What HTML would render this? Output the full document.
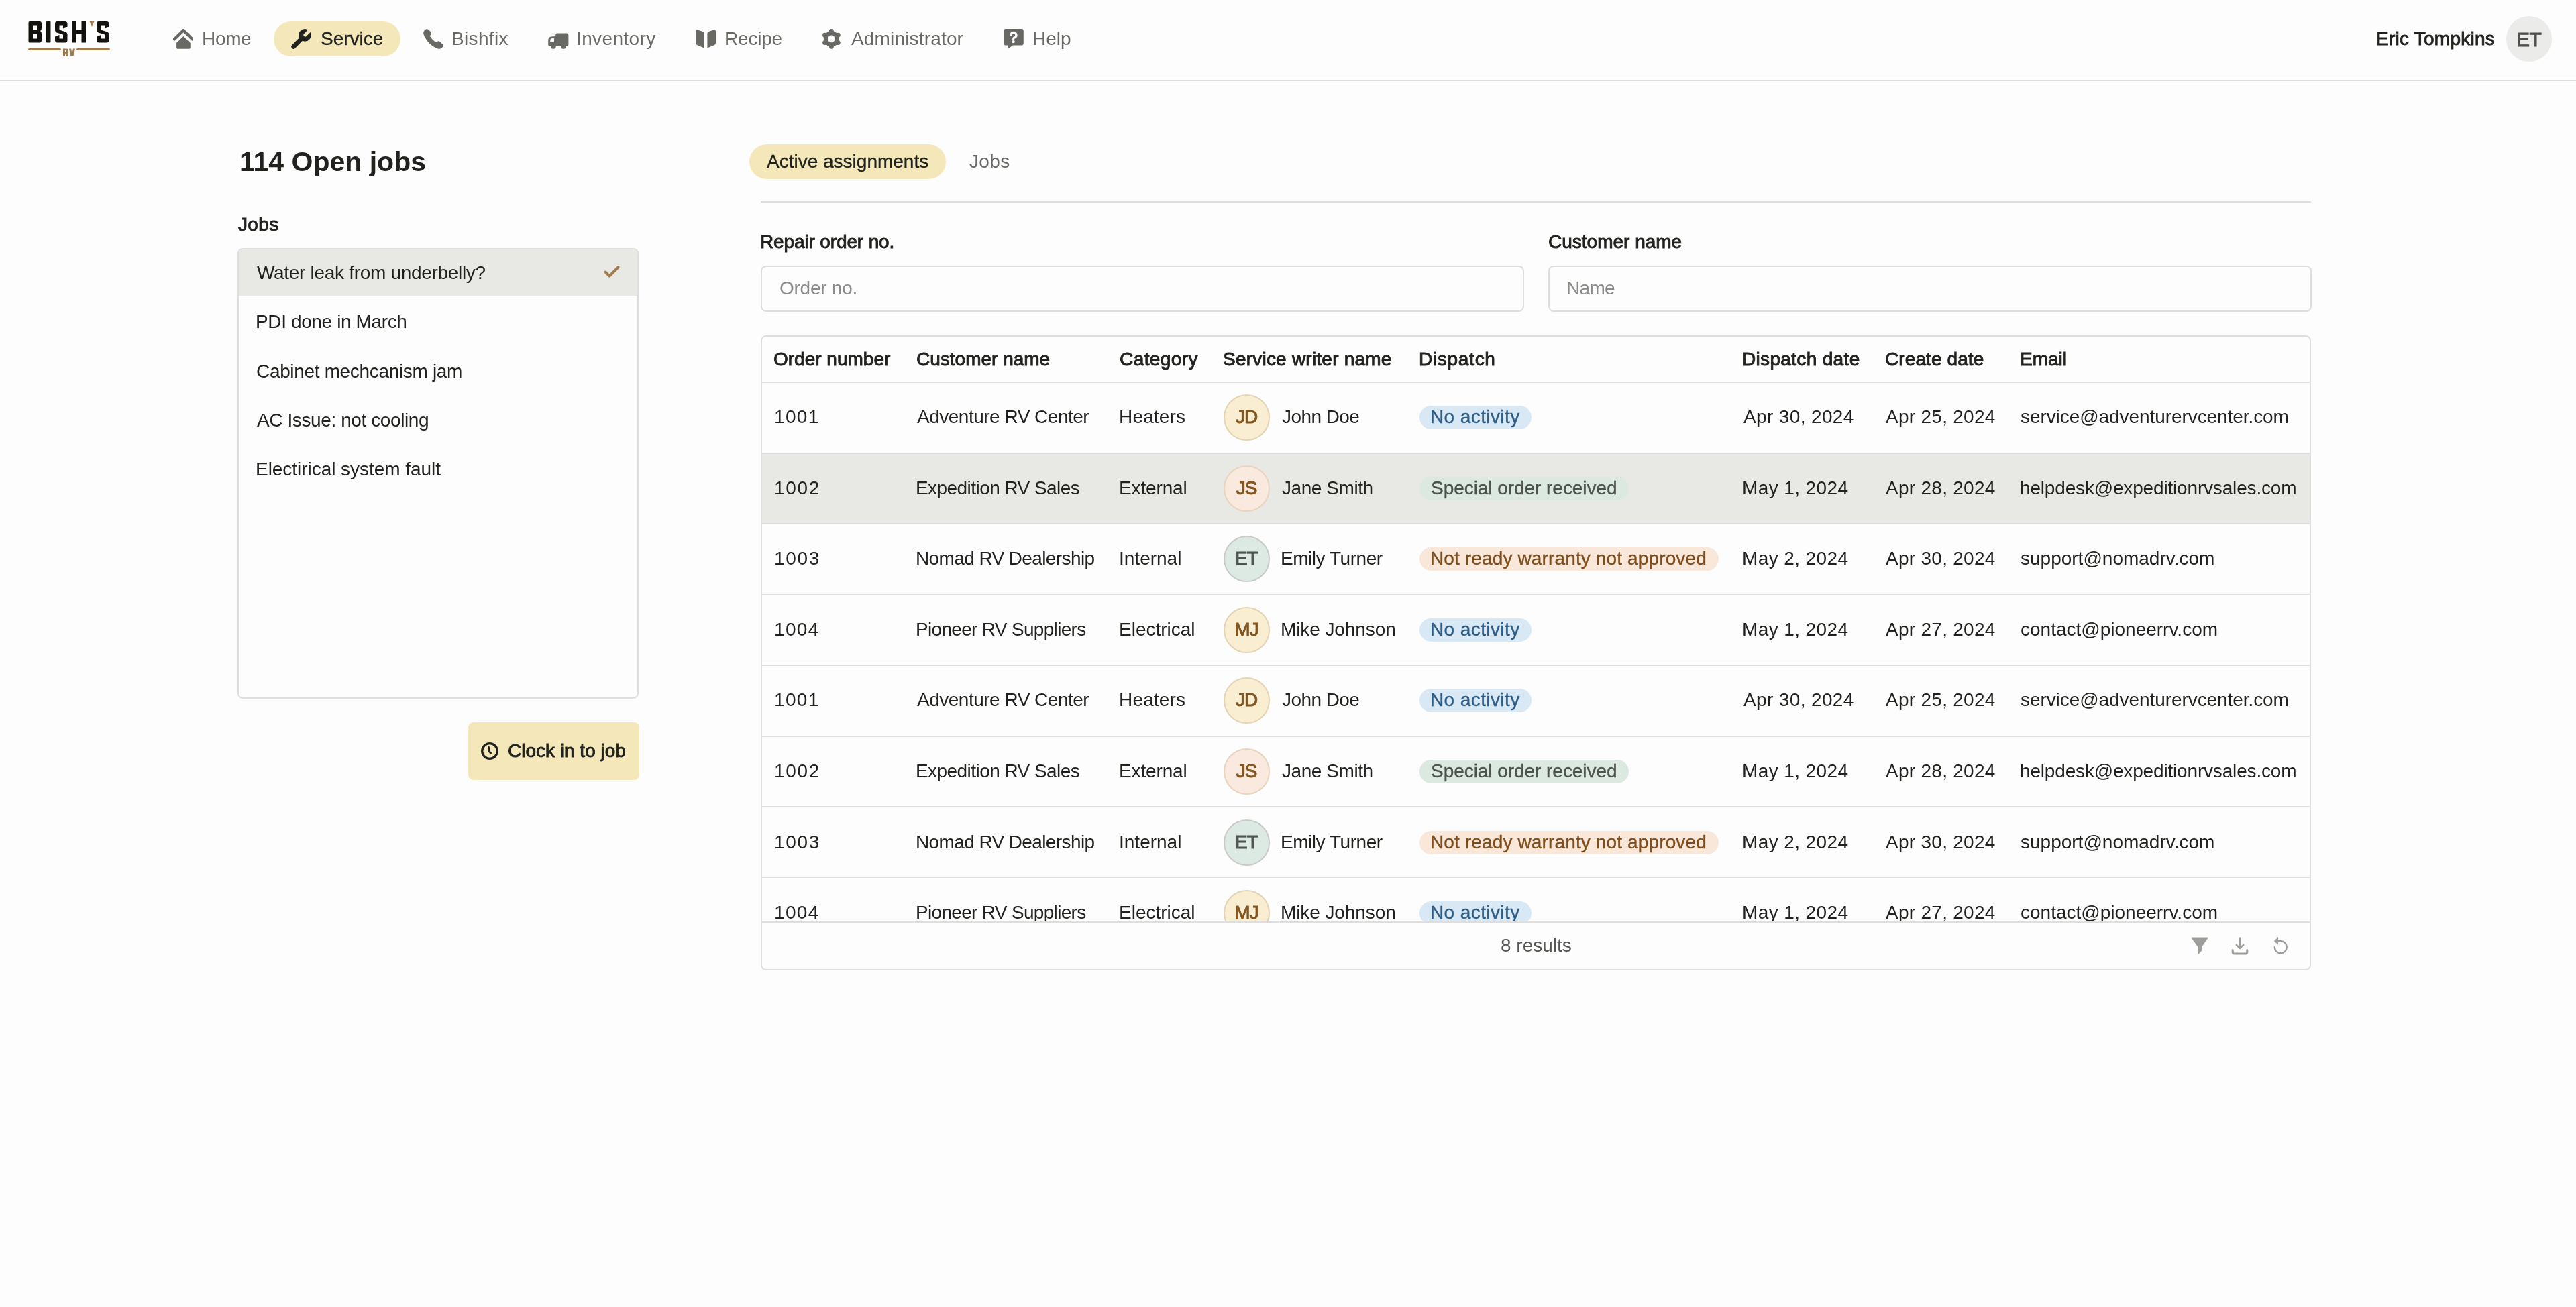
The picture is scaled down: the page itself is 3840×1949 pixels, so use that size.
<!DOCTYPE html><html><head><meta charset="utf-8"><style>
*{box-sizing:border-box;margin:0;padding:0}
html,body{width:3840px;height:1949px;overflow:hidden;background:#fdfdfd;font-family:"Liberation Sans", sans-serif;color:#21211e}
#root{position:absolute;left:0;top:0;width:3840px;height:1949px;will-change:transform;background:#fdfdfd}
.a{position:absolute}
.t{position:absolute;white-space:nowrap;font-size:28px;line-height:28px}
.b{font-weight:700}
.m{-webkit-text-stroke:0.35px currentColor}
.s{-webkit-text-stroke:0.9px currentColor}
.g{color:#686964}
svg{position:absolute;display:block}
</style></head><body><div id="root">
<div class="a" style="left:0;top:119px;width:3840px;height:2px;background:#dedede"></div>
<svg style="left:40px;top:30px" width="130" height="60" viewBox="0 0 130 60">
<g fill="#14120e">
<path d="M2.5 3.5 Q2.5 2 4 2 H19 Q22 2 22 5 V12 Q22 15 20 16 Q22 17 22 20 V30 Q22 33.5 19 33.5 H4 Q2.5 33.5 2.5 32 Z M9 8.5 V14 H15 V8.5 Z M9 20 V27.5 H15 V20 Z" fill-rule="evenodd"/>
<rect x="29" y="2" width="6.5" height="31.5" rx="1"/>
<path d="M45 2 H57 Q60.5 2 60.5 5.5 V10.5 L54 12.5 V8.5 H48.5 V14.5 L58 17.5 Q60.5 18.5 60.5 21 V30 Q60.5 33.5 57 33.5 H45.5 Q42 33.5 42 30 V24.5 L48.5 22 V27.5 H54 V21.5 L44.5 18.5 Q42 17.5 42 15 V5.5 Q42 2 45 2 Z"/>
<path d="M67 2 H73.5 V14.5 H81.5 V2 H88 V33.5 H81.5 V20.5 H73.5 V33.5 H67 Z"/>
<path d="M107 2 H119 Q122.5 2 122.5 5.5 V10.5 L116 12.5 V8.5 H110.5 V14.5 L120 17.5 Q122.5 18.5 122.5 21 V30 Q122.5 33.5 119 33.5 H107.5 Q104 33.5 104 30 V24.5 L110.5 22 V27.5 H116 V21.5 L106.5 18.5 Q104 17.5 104 15 V5.5 Q104 2 107 2 Z"/>
</g>
<g fill="#a27c4c">
<path d="M93.5 2 L100.5 2 L97 10 Z"/>
<rect x="2" y="42" width="49" height="3" rx="1.5"/>
<rect x="74" y="42" width="50" height="3" rx="1.5"/>
<path d="M54 42.5 H59.5 Q62 42.5 62 45 V48 Q62 49.5 60.5 50 L62.5 54 H59 L57.5 50.5 H57 V54 H54 Z M57 45 V48 H59 V45 Z" fill-rule="evenodd"/>
<path d="M63 42.5 H66 L67.5 50 L69 42.5 H72 L69.5 54 H65.5 Z"/>
</g>
</svg>
<div class="a" style="left:408px;top:32px;width:189px;height:52px;border-radius:26px;background:#f4e8ba"></div>
<svg style="left:258px;top:43px" width="30" height="30" viewBox="0 0 30 30" fill="#686964"><path d="M2 15.4 L15.4 2.2 L28.8 15.4" fill="none" stroke="#686964" stroke-width="4.4" stroke-linecap="round" stroke-linejoin="round"/><path d="M15.4 11 L25.8 21 V28.3 Q25.8 29.7 24.4 29.7 H6.5 Q5.1 29.7 5.1 28.3 V21 Z"/></svg>
<svg style="left:434px;top:43px" width="31" height="31" viewBox="0 0 31 31" fill="#686964"><line x1="20" y1="10" x2="3.6" y2="26.4" stroke="#222220" stroke-width="6.6" stroke-linecap="round"/><circle cx="20.5" cy="9.4" r="9.3" fill="#222220"/><line x1="21" y1="9" x2="32" y2="-2" stroke="#f4e8ba" stroke-width="5.2" stroke-linecap="round"/></svg>
<svg style="left:631px;top:43px" width="31" height="31" viewBox="0 0 31 31" fill="#686964"><path d="M4.8 0.2 C6 0 7 0.5 8 1.3 L11.5 5 C12.3 6 12.3 7.5 11.3 8.5 L9.8 10.5 C11.5 14 15.5 18 19.3 20 L21.5 18.6 C22.5 18 23.8 18 24.7 18.9 L29.2 23.3 C30.2 24.3 30 26 28.8 27.2 C27 29 25 30 22.5 29.8 C13 27 3 17 0.3 7.5 C0 5.5 0.5 3.5 2 2 C2.8 1 3.8 0.3 4.8 0.2 Z"/></svg>
<svg style="left:817px;top:49px" width="31" height="24" viewBox="0 0 31 24" fill="#686964"><path d="M11.2 3 Q11.2 0.5 13.7 0.5 H28 Q30.4 0.5 30.4 3 V17.5 Q30.4 19.7 28.2 19.7 H26.7 V20.2 Q26.7 23.7 23.2 23.7 H22.5 Q19 23.7 19 20.2 V19.7 H11.7 V20.2 Q11.7 23.7 8.2 23.7 H7.5 Q4 23.7 4 20.2 V19.7 H2.2 Q0.2 19.7 0.2 17.5 V11.5 Q0.2 5.2 6.5 5.2 H11.2 Z M3.3 13.6 H9 V7.9 H6.5 Q3.3 7.9 3.3 11 Z" fill-rule="evenodd"/></svg>
<svg style="left:1037px;top:44px" width="30" height="28" viewBox="0 0 30 28" fill="#686964"><path d="M0 2.5 Q0 0 2.5 0.2 L10.5 3 Q12.6 3.8 12.6 5.8 V27.5 L2.5 23.3 Q0 22.5 0 20 Z"/><path d="M30 2.5 Q30 0 27.5 0.2 L19.5 3 Q17.4 3.8 17.4 5.8 V27.5 L27.5 23.3 Q30 22.5 30 20 Z"/></svg>
<svg style="left:1225px;top:43px" width="30" height="30" viewBox="0 0 30 30" fill="#686964"><polygon points="14.40,2.70 24.97,8.80 24.97,21.00 14.40,27.10 3.83,21.00 3.83,8.80" stroke="#686964" stroke-width="2" stroke-linejoin="round"/><circle cx="14.40" cy="3.50" r="3.4"/><circle cx="24.27" cy="9.20" r="3.4"/><circle cx="24.27" cy="20.60" r="3.4"/><circle cx="14.40" cy="26.30" r="3.4"/><circle cx="4.53" cy="20.60" r="3.4"/><circle cx="4.53" cy="9.20" r="3.4"/><circle cx="14.4" cy="14.9" r="5.3" fill="#fdfdfd"/></svg>
<svg style="left:1496px;top:43px" width="31" height="30" viewBox="0 0 31 30" fill="#686964"><path d="M3 0 H26.8 Q29.8 0 29.8 3 V21.6 Q29.8 24.6 26.8 24.6 H14 L6.8 29.6 V24.6 H3 Q0 24.6 0 21.6 V3 Q0 0 3 0 Z"/><path d="M11.1 9.2 A3.9 3.9 0 1 1 16.3 12.9 Q14.6 13.5 14.6 14.9" fill="none" stroke="#fdfdfd" stroke-width="3.3" stroke-linecap="round"/><circle cx="14.6" cy="19.1" r="2.2" fill="#fdfdfd"/></svg>
<div class="t  g" style="left:301px;top:44px;font-size:28px;line-height:28px;letter-spacing:-0.333px;">Home</div>
<div class="t m " style="left:478px;top:44px;font-size:28px;line-height:28px;letter-spacing:0.0px;">Service</div>
<div class="t  g" style="left:673px;top:44px;font-size:28px;line-height:28px;letter-spacing:0.333px;">Bishfix</div>
<div class="t  g" style="left:859px;top:44px;font-size:28px;line-height:28px;letter-spacing:0.375px;">Inventory</div>
<div class="t  g" style="left:1080px;top:44px;font-size:28px;line-height:28px;letter-spacing:-0.2px;">Recipe</div>
<div class="t  g" style="left:1269px;top:44px;font-size:28px;line-height:28px;letter-spacing:0.167px;">Administrator</div>
<div class="t  g" style="left:1539px;top:44px;font-size:28px;line-height:28px;letter-spacing:0.0px;">Help</div>
<div class="t s " style="left:3542px;top:44px;font-size:28px;line-height:28px;letter-spacing:0.25px;">Eric Tompkins</div>
<div class="a" style="left:3736px;top:24px;width:68px;height:68px;border-radius:34px;background:#ebebea"></div>
<div class="t s " style="left:3752px;top:44px;font-size:30px;line-height:30px;letter-spacing:-3.0px;color:#4b4e4a;letter-spacing:-0.5px;left:3751px">ET</div>
<div class="t b " style="left:357px;top:221px;font-size:41px;line-height:41px;letter-spacing:0.0px;">114 Open jobs</div>
<div class="t s " style="left:355px;top:321px;font-size:28px;line-height:28px;letter-spacing:0.333px;">Jobs</div>
<div class="a" style="left:354px;top:370px;width:598px;height:672px;border:2px solid #dedede;border-radius:8px;overflow:hidden"><div class="a" style="left:0;top:0;width:594px;height:69px;background:#e8e8e5"></div></div>
<div class="t  " style="left:383px;top:393px;font-size:28px;line-height:28px;letter-spacing:-0.308px;">Water leak from underbelly?</div>
<div class="t  " style="left:381px;top:466px;font-size:28px;line-height:28px;letter-spacing:-0.375px;">PDI done in March</div>
<div class="t  " style="left:382px;top:540px;font-size:28px;line-height:28px;letter-spacing:-0.333px;">Cabinet mechcanism jam</div>
<div class="t  " style="left:383px;top:613px;font-size:28px;line-height:28px;letter-spacing:-0.4px;">AC Issue: not cooling</div>
<div class="t  " style="left:381px;top:686px;font-size:28px;line-height:28px;letter-spacing:-0.043px;">Electirical system fault</div>
<svg style="left:900px;top:396px" width="24" height="18" viewBox="0 0 24 18"><path d="M2.5 9.5 L8.5 15.5 L21.5 2.5" fill="none" stroke="#a47c4a" stroke-width="4" stroke-linecap="round" stroke-linejoin="round"/></svg>
<div class="a" style="left:698px;top:1077px;width:255px;height:86px;border-radius:8px;background:#f4e8ba"></div>
<svg style="left:716px;top:1106px" width="28" height="28" viewBox="0 0 28 28"><circle cx="14" cy="14" r="11.3" fill="none" stroke="#222220" stroke-width="3.3"/><path d="M12.5 8.5 L12.8 14 L15.5 17" fill="none" stroke="#222220" stroke-width="3" stroke-linecap="round" stroke-linejoin="round"/></svg>
<div class="t s " style="left:757px;top:1106px;font-size:28px;line-height:28px;letter-spacing:0.0px;">Clock in to job</div>
<div class="a" style="left:1117px;top:215px;width:293px;height:52px;border-radius:26px;background:#f4e8ba"></div>
<div class="t m " style="left:1143px;top:227px;font-size:28px;line-height:28px;letter-spacing:0.0px;">Active assignments</div>
<div class="t  g" style="left:1445px;top:227px;font-size:28px;line-height:28px;letter-spacing:0.333px;">Jobs</div>
<div class="a" style="left:1134px;top:300px;width:2311px;height:2px;background:#dedede"></div>
<div class="t s " style="left:1133px;top:347px;font-size:28px;line-height:28px;letter-spacing:-0.133px;">Repair order no.</div>
<div class="t s " style="left:2308px;top:347px;font-size:28px;line-height:28px;letter-spacing:0.0px;">Customer name</div>
<div class="a" style="left:1134px;top:396px;width:1138px;height:69px;border:2px solid #dedede;border-radius:8px"></div>
<div class="a" style="left:2308px;top:396px;width:1138px;height:69px;border:2px solid #dedede;border-radius:8px"></div>
<div class="t  " style="left:1162px;top:416px;font-size:28px;line-height:28px;letter-spacing:-0.25px;color:#8b8b88">Order no.</div>
<div class="t  " style="left:2335px;top:416px;font-size:28px;line-height:28px;letter-spacing:-0.667px;color:#8b8b88">Name</div>
<div class="a" style="left:1134px;top:500px;width:2311px;height:947px;border:2px solid #dedede;border-radius:8px;overflow:hidden">
<div class="t s " style="left:17px;top:20px;font-size:28px;line-height:28px;letter-spacing:0.0px;">Order number</div>
<div class="t s " style="left:230px;top:20px;font-size:28px;line-height:28px;letter-spacing:0.0px;">Customer name</div>
<div class="t s " style="left:533px;top:20px;font-size:28px;line-height:28px;letter-spacing:0.429px;">Category</div>
<div class="t s " style="left:687px;top:20px;font-size:28px;line-height:28px;letter-spacing:0.222px;">Service writer name</div>
<div class="t s " style="left:979px;top:20px;font-size:28px;line-height:28px;letter-spacing:0.714px;">Dispatch</div>
<div class="t s " style="left:1461px;top:20px;font-size:28px;line-height:28px;letter-spacing:0.333px;">Dispatch date</div>
<div class="t s " style="left:1674px;top:20px;font-size:28px;line-height:28px;letter-spacing:0.1px;">Create date</div>
<div class="t s " style="left:1875px;top:20px;font-size:28px;line-height:28px;letter-spacing:0.0px;">Email</div>
<div class="a" style="left:0;top:67px;width:2307px;height:2px;background:#dedede"></div>
<div class="a" style="left:0;top:69px;width:2307px;height:803px;overflow:hidden">
<div class="a" style="left:0;top:0.0px;width:2307px;height:105.5px;background:transparent">
<div class="a" style="left:0;bottom:0;width:100%;height:2px;background:#dedede"></div>
</div>
<div class="a" style="left:0;top:105.5px;width:2307px;height:105.5px;background:#e8e8e5">
<div class="a" style="left:0;bottom:0;width:100%;height:2px;background:#dedede"></div>
</div>
<div class="a" style="left:0;top:211.0px;width:2307px;height:105.5px;background:transparent">
<div class="a" style="left:0;bottom:0;width:100%;height:2px;background:#dedede"></div>
</div>
<div class="a" style="left:0;top:316.5px;width:2307px;height:105.5px;background:transparent">
<div class="a" style="left:0;bottom:0;width:100%;height:2px;background:#dedede"></div>
</div>
<div class="a" style="left:0;top:422.0px;width:2307px;height:105.5px;background:transparent">
<div class="a" style="left:0;bottom:0;width:100%;height:2px;background:#dedede"></div>
</div>
<div class="a" style="left:0;top:527.5px;width:2307px;height:105.5px;background:transparent">
<div class="a" style="left:0;bottom:0;width:100%;height:2px;background:#dedede"></div>
</div>
<div class="a" style="left:0;top:633.0px;width:2307px;height:105.5px;background:transparent">
<div class="a" style="left:0;bottom:0;width:100%;height:2px;background:#dedede"></div>
</div>
<div class="a" style="left:0;top:738.5px;width:2307px;height:105.5px;background:transparent">
<div class="a" style="left:0;bottom:0;width:100%;height:2px;background:#dedede"></div>
</div>
<div class="t  " style="left:18px;top:37px;font-size:28px;line-height:28px;letter-spacing:1.333px;">1001</div>
<div class="t  " style="left:231px;top:37px;font-size:28px;line-height:28px;letter-spacing:-0.5px;">Adventure RV Center</div>
<div class="t  " style="left:532px;top:37px;font-size:28px;line-height:28px;letter-spacing:0.167px;">Heaters</div>
<div class="a" style="left:688px;top:17px;width:69px;height:69px;border-radius:50%;background:#f9eed2;border:2px solid #e3d4b3"></div>
<div class="t s" style="left:688px;top:37px;width:69px;text-align:center;color:#82541f;letter-spacing:-1px;text-indent:-1px">JD</div>
<div class="t  " style="left:775px;top:37px;font-size:28px;line-height:28px;letter-spacing:-0.571px;">John Doe</div>
<div class="a" style="left:980px;top:34px;width:167px;height:35px;border-radius:18px;background:#d8e8f5"></div>
<div class="t m " style="left:996px;top:37px;font-size:28px;line-height:28px;letter-spacing:0.4px;color:#2d5c86">No activity</div>
<div class="t  " style="left:1463px;top:37px;font-size:28px;line-height:28px;letter-spacing:0.364px;">Apr 30, 2024</div>
<div class="t  " style="left:1675px;top:37px;font-size:28px;line-height:28px;letter-spacing:0.273px;">Apr 25, 2024</div>
<div class="t  " style="left:1876px;top:37px;font-size:28px;line-height:28px;letter-spacing:-0.071px;">service@adventurervcenter.com</div>
<div class="t  " style="left:18px;top:143px;font-size:28px;line-height:28px;letter-spacing:1.667px;">1002</div>
<div class="t  " style="left:229px;top:143px;font-size:28px;line-height:28px;letter-spacing:-0.556px;">Expedition RV Sales</div>
<div class="t  " style="left:532px;top:143px;font-size:28px;line-height:28px;letter-spacing:-0.143px;">External</div>
<div class="a" style="left:688px;top:123px;width:69px;height:69px;border-radius:50%;background:#f9e9de;border:2px solid #e8d5bc"></div>
<div class="t s" style="left:688px;top:143px;width:69px;text-align:center;color:#82541f;letter-spacing:-1px;text-indent:-1px">JS</div>
<div class="t  " style="left:775px;top:143px;font-size:28px;line-height:28px;letter-spacing:-0.444px;">Jane Smith</div>
<div class="a" style="left:980px;top:140px;width:312px;height:35px;border-radius:18px;background:#dce9e1"></div>
<div class="t m " style="left:997px;top:143px;font-size:28px;line-height:28px;letter-spacing:-0.048px;color:#4c524c">Special order received</div>
<div class="t  " style="left:1461px;top:143px;font-size:28px;line-height:28px;letter-spacing:0.4px;">May 1, 2024</div>
<div class="t  " style="left:1675px;top:143px;font-size:28px;line-height:28px;letter-spacing:0.273px;">Apr 28, 2024</div>
<div class="t  " style="left:1875px;top:143px;font-size:28px;line-height:28px;letter-spacing:-0.172px;">helpdesk@expeditionrvsales.com</div>
<div class="t  " style="left:18px;top:248px;font-size:28px;line-height:28px;letter-spacing:1.667px;">1003</div>
<div class="t  " style="left:229px;top:248px;font-size:28px;line-height:28px;letter-spacing:-0.611px;">Nomad RV Dealership</div>
<div class="t  " style="left:532px;top:248px;font-size:28px;line-height:28px;letter-spacing:0.0px;">Internal</div>
<div class="a" style="left:688px;top:228px;width:69px;height:69px;border-radius:50%;background:#dde9e3;border:2px solid #c9cbc8"></div>
<div class="t s" style="left:688px;top:248px;width:69px;text-align:center;color:#4e534f;letter-spacing:-1px;text-indent:-1px">ET</div>
<div class="t  " style="left:773px;top:248px;font-size:28px;line-height:28px;letter-spacing:-0.455px;">Emily Turner</div>
<div class="a" style="left:980px;top:245px;width:446px;height:35px;border-radius:18px;background:#f9e7d9"></div>
<div class="t m " style="left:996px;top:248px;font-size:28px;line-height:28px;letter-spacing:0.133px;color:#7d4d1d">Not ready warranty not approved</div>
<div class="t  " style="left:1461px;top:248px;font-size:28px;line-height:28px;letter-spacing:0.4px;">May 2, 2024</div>
<div class="t  " style="left:1675px;top:248px;font-size:28px;line-height:28px;letter-spacing:0.273px;">Apr 30, 2024</div>
<div class="t  " style="left:1876px;top:248px;font-size:28px;line-height:28px;letter-spacing:0.0px;">support@nomadrv.com</div>
<div class="t  " style="left:18px;top:354px;font-size:28px;line-height:28px;letter-spacing:1.333px;">1004</div>
<div class="t  " style="left:229px;top:354px;font-size:28px;line-height:28px;letter-spacing:-0.684px;">Pioneer RV Suppliers</div>
<div class="t  " style="left:532px;top:354px;font-size:28px;line-height:28px;letter-spacing:0.0px;">Electrical</div>
<div class="a" style="left:688px;top:334px;width:69px;height:69px;border-radius:50%;background:#f9eed2;border:2px solid #e3d4b3"></div>
<div class="t s" style="left:688px;top:354px;width:69px;text-align:center;color:#82541f;letter-spacing:-1px;text-indent:-1px">MJ</div>
<div class="t  " style="left:773px;top:354px;font-size:28px;line-height:28px;letter-spacing:-0.091px;">Mike Johnson</div>
<div class="a" style="left:980px;top:351px;width:167px;height:35px;border-radius:18px;background:#d8e8f5"></div>
<div class="t m " style="left:996px;top:354px;font-size:28px;line-height:28px;letter-spacing:0.4px;color:#2d5c86">No activity</div>
<div class="t  " style="left:1461px;top:354px;font-size:28px;line-height:28px;letter-spacing:0.4px;">May 1, 2024</div>
<div class="t  " style="left:1675px;top:354px;font-size:28px;line-height:28px;letter-spacing:0.273px;">Apr 27, 2024</div>
<div class="t  " style="left:1876px;top:354px;font-size:28px;line-height:28px;letter-spacing:0.0px;">contact@pioneerrv.com</div>
<div class="t  " style="left:18px;top:459px;font-size:28px;line-height:28px;letter-spacing:1.333px;">1001</div>
<div class="t  " style="left:231px;top:459px;font-size:28px;line-height:28px;letter-spacing:-0.5px;">Adventure RV Center</div>
<div class="t  " style="left:532px;top:459px;font-size:28px;line-height:28px;letter-spacing:0.167px;">Heaters</div>
<div class="a" style="left:688px;top:439px;width:69px;height:69px;border-radius:50%;background:#f9eed2;border:2px solid #e3d4b3"></div>
<div class="t s" style="left:688px;top:459px;width:69px;text-align:center;color:#82541f;letter-spacing:-1px;text-indent:-1px">JD</div>
<div class="t  " style="left:775px;top:459px;font-size:28px;line-height:28px;letter-spacing:-0.571px;">John Doe</div>
<div class="a" style="left:980px;top:456px;width:167px;height:35px;border-radius:18px;background:#d8e8f5"></div>
<div class="t m " style="left:996px;top:459px;font-size:28px;line-height:28px;letter-spacing:0.4px;color:#2d5c86">No activity</div>
<div class="t  " style="left:1463px;top:459px;font-size:28px;line-height:28px;letter-spacing:0.364px;">Apr 30, 2024</div>
<div class="t  " style="left:1675px;top:459px;font-size:28px;line-height:28px;letter-spacing:0.273px;">Apr 25, 2024</div>
<div class="t  " style="left:1876px;top:459px;font-size:28px;line-height:28px;letter-spacing:-0.071px;">service@adventurervcenter.com</div>
<div class="t  " style="left:18px;top:565px;font-size:28px;line-height:28px;letter-spacing:1.667px;">1002</div>
<div class="t  " style="left:229px;top:565px;font-size:28px;line-height:28px;letter-spacing:-0.556px;">Expedition RV Sales</div>
<div class="t  " style="left:532px;top:565px;font-size:28px;line-height:28px;letter-spacing:-0.143px;">External</div>
<div class="a" style="left:688px;top:545px;width:69px;height:69px;border-radius:50%;background:#f9e9de;border:2px solid #e8d5bc"></div>
<div class="t s" style="left:688px;top:565px;width:69px;text-align:center;color:#82541f;letter-spacing:-1px;text-indent:-1px">JS</div>
<div class="t  " style="left:775px;top:565px;font-size:28px;line-height:28px;letter-spacing:-0.444px;">Jane Smith</div>
<div class="a" style="left:980px;top:562px;width:312px;height:35px;border-radius:18px;background:#dce9e1"></div>
<div class="t m " style="left:997px;top:565px;font-size:28px;line-height:28px;letter-spacing:-0.048px;color:#4c524c">Special order received</div>
<div class="t  " style="left:1461px;top:565px;font-size:28px;line-height:28px;letter-spacing:0.4px;">May 1, 2024</div>
<div class="t  " style="left:1675px;top:565px;font-size:28px;line-height:28px;letter-spacing:0.273px;">Apr 28, 2024</div>
<div class="t  " style="left:1875px;top:565px;font-size:28px;line-height:28px;letter-spacing:-0.172px;">helpdesk@expeditionrvsales.com</div>
<div class="t  " style="left:18px;top:671px;font-size:28px;line-height:28px;letter-spacing:1.667px;">1003</div>
<div class="t  " style="left:229px;top:671px;font-size:28px;line-height:28px;letter-spacing:-0.611px;">Nomad RV Dealership</div>
<div class="t  " style="left:532px;top:671px;font-size:28px;line-height:28px;letter-spacing:0.0px;">Internal</div>
<div class="a" style="left:688px;top:651px;width:69px;height:69px;border-radius:50%;background:#dde9e3;border:2px solid #c9cbc8"></div>
<div class="t s" style="left:688px;top:671px;width:69px;text-align:center;color:#4e534f;letter-spacing:-1px;text-indent:-1px">ET</div>
<div class="t  " style="left:773px;top:671px;font-size:28px;line-height:28px;letter-spacing:-0.455px;">Emily Turner</div>
<div class="a" style="left:980px;top:668px;width:446px;height:35px;border-radius:18px;background:#f9e7d9"></div>
<div class="t m " style="left:996px;top:671px;font-size:28px;line-height:28px;letter-spacing:0.133px;color:#7d4d1d">Not ready warranty not approved</div>
<div class="t  " style="left:1461px;top:671px;font-size:28px;line-height:28px;letter-spacing:0.4px;">May 2, 2024</div>
<div class="t  " style="left:1675px;top:671px;font-size:28px;line-height:28px;letter-spacing:0.273px;">Apr 30, 2024</div>
<div class="t  " style="left:1876px;top:671px;font-size:28px;line-height:28px;letter-spacing:0.0px;">support@nomadrv.com</div>
<div class="t  " style="left:18px;top:776px;font-size:28px;line-height:28px;letter-spacing:1.333px;">1004</div>
<div class="t  " style="left:229px;top:776px;font-size:28px;line-height:28px;letter-spacing:-0.684px;">Pioneer RV Suppliers</div>
<div class="t  " style="left:532px;top:776px;font-size:28px;line-height:28px;letter-spacing:0.0px;">Electrical</div>
<div class="a" style="left:688px;top:756px;width:69px;height:69px;border-radius:50%;background:#f9eed2;border:2px solid #e3d4b3"></div>
<div class="t s" style="left:688px;top:776px;width:69px;text-align:center;color:#82541f;letter-spacing:-1px;text-indent:-1px">MJ</div>
<div class="t  " style="left:773px;top:776px;font-size:28px;line-height:28px;letter-spacing:-0.091px;">Mike Johnson</div>
<div class="a" style="left:980px;top:773px;width:167px;height:35px;border-radius:18px;background:#d8e8f5"></div>
<div class="t m " style="left:996px;top:776px;font-size:28px;line-height:28px;letter-spacing:0.4px;color:#2d5c86">No activity</div>
<div class="t  " style="left:1461px;top:776px;font-size:28px;line-height:28px;letter-spacing:0.4px;">May 1, 2024</div>
<div class="t  " style="left:1675px;top:776px;font-size:28px;line-height:28px;letter-spacing:0.273px;">Apr 27, 2024</div>
<div class="t  " style="left:1876px;top:776px;font-size:28px;line-height:28px;letter-spacing:0.0px;">contact@pioneerrv.com</div>
</div>
<div class="a" style="left:0;top:872px;width:2307px;height:2px;background:#dedede"></div>
<div class="t  " style="left:1101px;top:894px;font-size:28px;line-height:28px;letter-spacing:0.0px;color:#565753">8 results</div>
<svg style="left:2130px;top:896px" width="26" height="26" viewBox="0 0 26 26"><path d="M0.5 0.5 H25.5 L16 14 V19.5 L10.5 25.5 V14 Z" fill="#9d9e9a"/></svg>
<svg style="left:2190px;top:896px" width="26" height="26" viewBox="0 0 26 26"><path d="M13 1.5 V15.5 M7.8 10.8 L13 16 L18.2 10.8" fill="none" stroke="#9d9e9a" stroke-width="2.5" stroke-linecap="round" stroke-linejoin="round"/><path d="M2.2 18.6 V21.6 Q2.2 24 4.6 24 H21.4 Q23.8 24 23.8 21.6 V18.6" fill="none" stroke="#9d9e9a" stroke-width="3.1" stroke-linecap="round" stroke-linejoin="round"/></svg>
<svg style="left:2250px;top:895px" width="28" height="28" viewBox="0 0 28 28"><path d="M9.5 6.3 H13.8 A9 9 0 1 1 4.8 15.3" fill="none" stroke="#9d9e9a" stroke-width="2.4" stroke-linecap="round"/><path d="M4.3 6.1 L9.6 1.2 V11 Z" fill="#9d9e9a" stroke="#9d9e9a" stroke-width="1" stroke-linejoin="round"/></svg>
</div>
</div></body></html>
